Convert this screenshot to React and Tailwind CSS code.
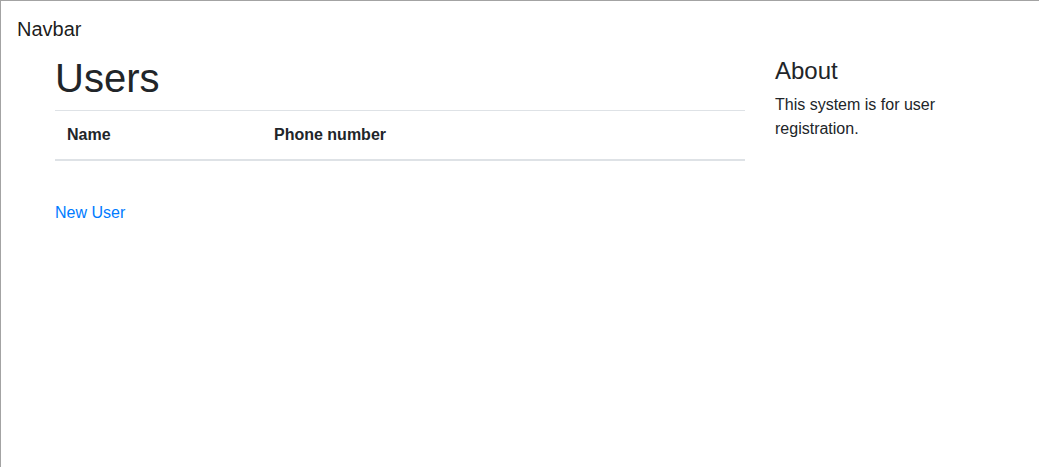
import React from 'react';

const users = [];

const App = () => {
  return (
    <div
      className="min-h-[467px] border-l border-t border-[#a3a3a3] bg-white text-[#212529]"
      style={{ fontFamily: '"Liberation Sans", Arial, sans-serif' }}
    >
      <nav className="px-4 pt-[8px] pb-[5px]">
        <a href="#" className="block py-[5px] text-[20px] leading-[30px] text-black/90">
          Navbar
        </a>
      </nav>

      <div className="mx-auto w-[960px] px-[15px]">
        <div className="flex gap-[30px]">
          <div className="w-[690px]">
            <h1 className="mb-2 text-[40px] font-medium leading-[48px]">Users</h1>
            <table className="mb-4 w-full text-left text-[16px] leading-6">
              <thead>
                <tr className="border-t border-[#dee2e6]">
                  <th className="w-[207px] border-b-2 border-[#dee2e6] p-3 font-bold">Name</th>
                  <th className="border-b-2 border-[#dee2e6] p-3 font-bold">Phone number</th>
                </tr>
              </thead>
              <tbody>
                {users.map((u) => (
                  <tr key={u.id} className="border-t border-[#dee2e6]">
                    <td className="p-3">{u.name}</td>
                    <td className="p-3">{u.phone}</td>
                  </tr>
                ))}
              </tbody>
            </table>
            <div className="h-6" />
            <a href="#" className="text-[16px] leading-6 text-[#007bff]">
              New User
            </a>
          </div>

          <div className="w-[210px]">
            <h4 className="mt-[2px] mb-2 text-[24px] font-medium leading-[29px]">About</h4>
            <p className="text-[16px] leading-6">This system is for user registration.</p>
          </div>
        </div>
      </div>
    </div>
  );
};

export default App;
